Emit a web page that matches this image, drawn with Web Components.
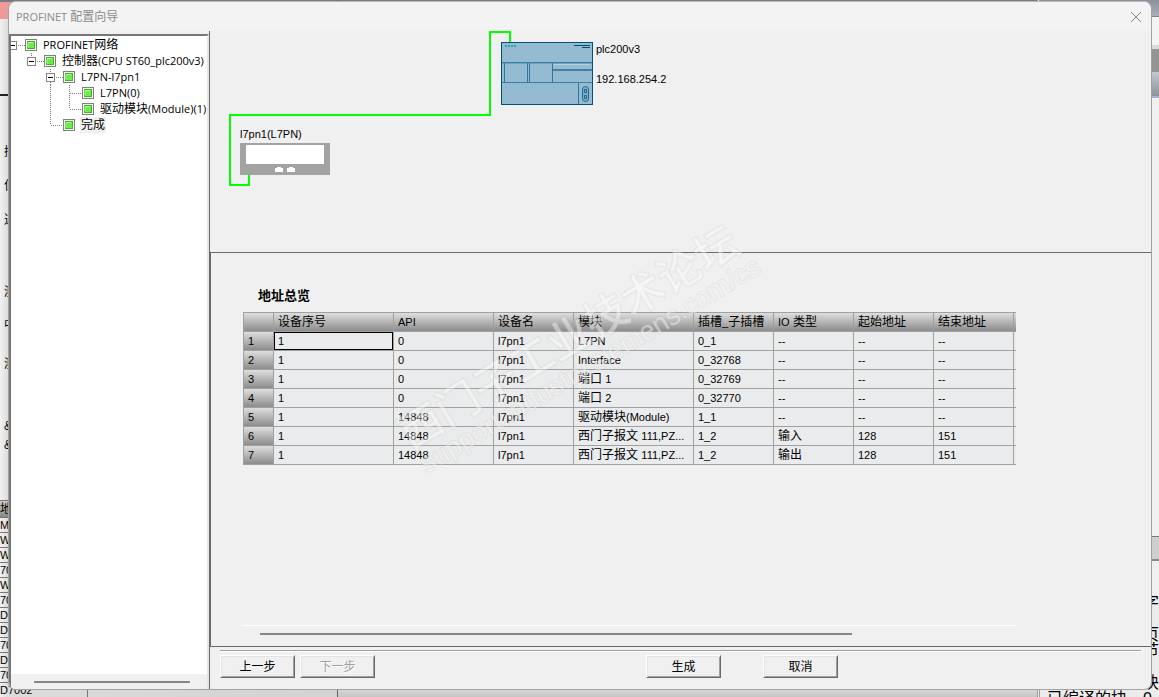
<!DOCTYPE html>
<html lang="zh-CN">
<head>
<meta charset="utf-8">
<title>PROFINET 配置向导</title>
<style>
html, body { margin: 0; height: 100%; overflow: hidden; }
body { font: 12px/16px "Liberation Sans", "Noto Sans CJK SC", sans-serif; color: #000; --latin: 11px; }
</style>
</head>
<body>
<desktop-shell>
  <editor-backdrop slot="back"></editor-backdrop>
  <wizard-dialog heading="PROFINET 配置向导">
    <project-tree slot="nav"></project-tree>
    <network-view slot="network"></network-view>
    <address-overview slot="overview"></address-overview>
    <wizard-button slot="steps">上一步</wizard-button>
    <wizard-button slot="steps" disabled>下一步</wizard-button>
    <wizard-button slot="finish">生成</wizard-button>
    <wizard-button slot="finish">取消</wizard-button>
  </wizard-dialog>
  <forum-watermark slot="mark"></forum-watermark>
</desktop-shell>

<script>
const LATIN = '.l{font-size:var(--latin)}';
// Western runs are set one size smaller than the Chinese characters beside them.
const mixed = t => t.replace(/[\x21-\x7e]+( [\x21-\x7e]+)*/g, m => `<span class="l">${m}</span>`);
const define = (name, render) => customElements.define(name, class extends HTMLElement {
  connectedCallback() {
    if (!this.shadowRoot) this.attachShadow({ mode: 'open' }).innerHTML = render(this);
  }
});

define('desktop-shell', () => `
<style>
:host { display: grid; position: relative; height: 100vh; grid-template: minmax(0,1fr) / minmax(0,1fr); overflow: hidden; }
.back, .front { grid-area: 1 / 1; display: grid; min-height: 0; }
.front { padding: 1px 7px 7px 8px; position: relative; }
</style>
<div class="back"><slot name="back"></slot></div>
<div class="front"><slot></slot></div>
<slot name="mark"></slot>`);

define('editor-backdrop', () => {
  const labels = [[55,'控'],[18,'位'],[18,'通'],[56,'测'],[17,'中'],[23,'测'],[46,'&amp;'],[3,'&amp;']];
  const rows = ['M','W','W','70','W','70','D','D','70','D','70','D7002'];
  return `
<style>
:host { display: grid; grid-template-columns: 338px 1fr 122px; overflow: hidden; min-height: 0;
  background: linear-gradient(#d8d8d8, #c6c6c6) bottom / 100% 8px no-repeat, #85878b; }
.left, .right { overflow: hidden; min-height: 0; background: #f0f0f0; }
.left { display: flex; flex-direction: column; background: linear-gradient(#777b82 0 2px, transparent 2px), linear-gradient(90deg, #f2f2f2, #dcdcdc 8px, #d2d2d2); border-right: 1px solid #666; box-sizing: border-box; }
.tab { height: 17px; margin-top: 2px; background: #ee9a9b; flex: none; }
.line { height: 75px; border-bottom: 2px solid #222; flex: none; }
.bar { height: 404px; flex: none; }
.bar p { margin: 0; height: 16px; padding-left: 4px; }
.head { height: 17px; flex: none; background: linear-gradient(#ccc, #888); border-top: 1px solid #777; box-sizing: border-box; }
.cell { height: 15px; line-height: 15px; flex: none; width: 88px; box-sizing: border-box; border-top: 1px solid #777; border-right: 1px solid #777; font-size: var(--latin); }
.mid { min-height: 0; background: linear-gradient(#777b82 0 2px, transparent 2px); }
.right { display: grid; grid-template-rows: 17px 28px 4px 23px 24px 2px 439px 24px 34px 1fr; border-left: 3px double #999; }
.right > :nth-child(1) { background: linear-gradient(#8b919c, #a9aeb7); border-bottom: 1px solid #7d8490; box-sizing: border-box; }
.right > :nth-child(2) { background: #f4f4f4; }
.right > :nth-child(3) { background: #d9d9d9; }
.right > :nth-child(4) { background: #949494; }
.right > :nth-child(5) { background: linear-gradient(#c4c8cf, #8c929c); }
.right > :nth-child(6) { background: #a9b4d4; }
.right > :nth-child(7) { background: #f0f0f0; border-bottom: 1px solid #777; box-sizing: border-box; }
.right > :nth-child(8) { background: #cfcfcf; border-bottom: 2px solid #888; box-sizing: border-box; }
.right > :nth-child(9) { background: #f0f0f0; }
.log { background: #ececec; font-size: 16px; line-height: 16px; padding-left: 7px; white-space: nowrap; }
.log p { margin: 0; height: 16px; }
.edge { text-align: right; }
</style>
<div class="left"><div class="tab"></div><div class="line"></div>
<div class="bar">${labels.map(([g,t],i) => `<p style="padding-top:${g - (i === 0 ? 7 : 0)}px">${t}</p>`).join('')}</div>
<div class="head">地址</div>${rows.map(t => `<div class="cell">${t}</div>`).join('')}</div>
<div class="mid"></div>
<div class="right"><div></div><div></div><div></div><div></div><div></div><div></div><div></div><div></div><div></div>
<div class="log"><p class="edge">字</p><p></p><p class="edge">页</p><p class="edge">节</p><p></p><p>正在编译系统块</p><p>已编译的块，0</p></div></div>`;
});

define('wizard-dialog', el => `
<style>
:host { display: grid; grid-template-rows: 29px minmax(0,1fr); min-height: 0; background: #f0f0f0; border: 1px solid #a3a3a3; border-top-color: #bbb; border-radius: 8px; overflow: hidden; box-sizing: border-box; }
header { display: flex; justify-content: space-between; align-items: center; background: #f3f3f3; padding: 0 9px 0 7px; color: #8b8b8b; }
h1 { font: inherit; margin: 0; font-family: "Open Sans", "Noto Sans CJK SC", sans-serif; }
${LATIN}
header button { width: 12px; height: 12px; border: 0; padding: 0; background: none; }
header svg { display: block; }
.body { display: grid; grid-template-columns: 201px minmax(0,1fr); min-height: 0; }
.nav { display: grid; min-height: 0; padding-top: 3px; border-right: 1px solid #696969; }
main { display: grid; grid-template-rows: 221px minmax(0,1fr) 42px; min-width: 0; min-height: 0; }
.over { border: solid #696969; border-width: 1px 0 1px 1px; min-height: 0; overflow: hidden; }
footer { padding: 3px 10px 0; }
hr { margin: 0; border: solid; border-width: 1px 0; border-color: #a0a0a0 transparent #fff; }
.bar { display: flex; padding-top: 3px; }
.steps { display: flex; gap: 5px; margin-right: 271px; }
.finish { display: flex; gap: 42px; }
</style>
<header><h1>${mixed(el.getAttribute('heading'))}</h1>
<button aria-label="关闭"><svg width="12" height="12" viewBox="0 0 12 12" stroke="#888" fill="none"><path d="M1 1l10 10M11 1L1 11"/></svg></button></header>
<div class="body">
<div class="nav"><slot name="nav"></slot></div>
<main><slot name="network"></slot><div class="over"><slot name="overview"></slot></div>
<footer><hr><div class="bar"><div class="steps"><slot name="steps"></slot></div><div class="finish"><slot name="finish"></slot></div></div></footer></main>
</div>`);

define('wizard-button', el => `
<style>
:host { display: block; }
button { display: block; width: 75px; height: 23px; padding: 0; font: inherit; color: #000; background: #f0f0f0; border: 1px solid; border-color: #fff #696969 #696969 #fff; box-shadow: inset 1px 1px #e3e3e3, inset -1px -1px #a0a0a0; }
button:disabled { color: #a0a0a0; text-shadow: 1px 1px #fff; }
</style>
<button ${el.hasAttribute('disabled') ? 'disabled' : ''}><slot></slot></button>`);

define('project-tree', () => {
  // Guide cells: "." empty, "|" pass-through, "T" branch, "L" last branch, "0" root box, "-" box, "+" box with line below.
  const rows = [['0','PROFINET网络'],['.-','控制器(CPU ST60_plc200v3)'],['..+','L7PN-l7pn1'],['..|T','L7PN(0)'],['..|L','驱动模块(Module)(1)'],['..L','完成']];
  const cell = c => {
    const v = { '|':'M9.5 0V16', 'T':'M9.5 0V16M10 8.5H22', 'L':'M9.5 0V8M10 8.5H22', '0':'M15 8.5H22', '-':'M9.5 0V4M15 8.5H22', '+':'M9.5 0V4M9.5 13V16M15 8.5H22' }[c] || '';
    const box = '0-+'.includes(c) ? '<rect x="5.5" y="4.5" width="8" height="8" fill="#fff" stroke="#848484"/><path d="M7 8.5h5" stroke="#000"/>' : '';
    return `<svg width="19" height="16" overflow="visible" fill="none"><path d="${v}" stroke="#808080" stroke-dasharray="1 1"/>${box}</svg>`;
  };
  return `
<style>
:host { display: grid; grid-template-rows: minmax(0,1fr) 15px; min-height: 0; overflow: hidden; box-sizing: border-box; border: solid #777; border-width: 2px 2px 0 2px; border-right-color: #e6e6e6; background: #f0f0f0; }
ul { list-style: none; margin: 0; padding: 1px 0 0; background: #fff; overflow: hidden; font-family: "Open Sans", "Noto Sans CJK SC", sans-serif; }
li { display: flex; height: 16px; margin-left: -8px; white-space: nowrap; align-items: center; }
svg { flex: none; display: block; }
.on { margin: 0 5px 0 3px; }
.t { padding: 0 1px; line-height: 16px; height: 16px; }
li:last-child .t { background: #f0f0f0; }
${LATIN}
.thumb { height: 2px; background: #868686; margin: 7px 17px 0 23px; }
</style>
<ul role="tree">${rows.map(([g,t]) => `<li role="treeitem">${[...g].map(cell).join('')}
<svg class="on" width="12" height="12"><rect x=".5" y=".5" width="11" height="11" fill="#fff" stroke="#808080"/><rect x="2.5" y="2.5" width="7" height="7" fill="#6fe84a" stroke="#2fbf1d"/><path d="M3 8.5V3.5H8" stroke="#b4f79c" fill="none"/></svg><span class="t">${mixed(t)}</span></li>`).join('')}</ul>
<div class="thumb"></div>`;
});

define('network-view', () => `
<style>
:host { display: block; position: relative; overflow: hidden; font-size: var(--latin); }
svg, span { position: absolute; }
.wire { left: 0; top: 0; }
.dev { left: 30px; top: 112px; }
.plc { left: 291px; top: 11px; }
.a { left: 30px; top: 95px; }
.b { left: 386px; top: 10px; }
.c { left: 386px; top: 40px; }
</style>
<svg class="wire" width="400" height="200" fill="none" stroke="#0f0" stroke-width="2"><path d="M300 11V1H280V84H20V154H39V144"/></svg>
<svg class="plc" width="92" height="63"><rect x=".5" y=".5" width="91" height="62" fill="#94bbd2" stroke="#044f78"/>
<path d="M1 20.5h90M1 49.5h90" stroke="#3b7fa5"/><path d="M1 21.5h90" stroke="#6fa3c0"/>
<path d="M3.5 21v20M26.5 21v20M28.5 21v20M51.5 21v20M77.5 41v21" stroke="#2f759c"/><path d="M1 40.5h90" stroke="#3b7fa5"/><path d="M1 49.500h90" stroke="#94bbd2" stroke-width="2"/><path d="M77.5 41v21" stroke="#2f759c"/>
<path d="M52 28h39" stroke="#447fa6" stroke-width="2"/><path d="M52 22.5h37" stroke="#b5d0de"/>
<path d="M4 4h12" stroke="#2aa7a0" stroke-width="2" stroke-dasharray="2 1"/><path d="M73 3.5h16M81 5.5h8" stroke="#044f78" stroke-width="1"/>
<rect x="81.500" y="44.500" width="6" height="15" rx="3" fill="#7fabc5" stroke="#1b668f"/><path d="M83.5 47.500h2v3h-2zM83.5 53.500h2v3h-2z" fill="none" stroke="#1b668f"/></svg>
<svg class="dev" width="90" height="32"><path d="M0 0h90v32H0z" fill="#a3a3a3"/><path d="M6 2h78v19H6zM35 25h2v-1h4v1h2v4h-8zM47 25h2v-1h4v1h2v4h-8z" fill="#fff"/></svg>
<span class="a">l7pn1(L7PN)</span><span class="b">plc200v3</span><span class="c">192.168.254.2</span>`);

define('address-overview', () => {
  const head = ['设备序号','API','设备名','模块','插槽_子插槽','IO 类型','起始地址','结束地址'];
  const data = [
    ['1','0','l7pn1','L7PN','0_1','--','--','--'],
    ['1','0','l7pn1','Interface','0_32768','--','--','--'],
    ['1','0','l7pn1','端口 1','0_32769','--','--','--'],
    ['1','0','l7pn1','端口 2','0_32770','--','--','--'],
    ['1','14848','l7pn1','驱动模块(Module)','1_1','--','--','--'],
    ['1','14848','l7pn1','西门子报文 111,PZ...','1_2','输入','128','151'],
    ['1','14848','l7pn1','西门子报文 111,PZ...','1_2','输出','128','151']];
  return `
<style>
:host { display: flex; flex-direction: column; height: 100%; box-sizing: border-box; padding: 34px 134px 11px 32px; }
h2 { font-size: 13px; line-height: 18px; margin: 0 0 7px 15px; }
table { border-collapse: separate; border-spacing: 0; table-layout: fixed; width: 773px; border-top: 1px solid #a0a0a0; border-left: 1px solid #a0a0a0; }
th, td { height: 18px; line-height: 18px; padding: 0 0 0 4px; text-align: left; font-weight: normal; white-space: nowrap; overflow: hidden; border: solid #a0a0a0; border-width: 0 1px 1px 0; }
td { background: #eaebec; }
th { background: linear-gradient(#dedede, #8c8c8c); }
tr > :last-child { border-right: 0; padding: 0; }
.cur { box-shadow: inset 0 0 0 1px #000; }
${LATIN}
.scroll { margin-top: auto; border-top: 1px solid #fff; padding: 7px 165px 0 17px; }
.scroll div { height: 2px; background: #868686; }
</style>
<h2>地址总览</h2>
<table><colgroup>${[30,120,100,80,120,80,80,80,80,2].map(w => `<col style="width:${w}px">`).join('')}</colgroup>
<thead><tr><th></th>${head.map(t => `<th scope="col">${mixed(t)}</th>`).join('')}<th></th></tr></thead>
<tbody>${data.map((r,i) => `<tr><th scope="row">${mixed(String(i+1))}</th>${r.map((t,j) => `<td${i+j ? '' : ' class="cur"'}>${mixed(t)}</td>`).join('')}<td></td></tr>`).join('')}</tbody></table>
<div class="scroll"><div></div></div>`;
});

define('forum-watermark', () => `
<style>
:host { display: block; position: absolute; left: 390px; top: 210px; pointer-events: none; }
svg { display: block; }
text { fill: #fff; fill-opacity: .42; stroke: #bbb; stroke-opacity: .2; stroke-width: 2px; paint-order: stroke; text-anchor: middle; }
.zh { font: 500 43px "Noto Sans CJK SC", sans-serif; }
.en { font: 27px "Liberation Sans", sans-serif; }
</style>
<svg width="400" height="280" aria-hidden="true"><g transform="translate(179 128) rotate(-31)"><text class="zh" y="15">西门子工业技术论坛</text><text class="en" x="4" y="43">support.industry.siemens.com/cs</text></g></svg>`);
</script>
</body>
</html>
